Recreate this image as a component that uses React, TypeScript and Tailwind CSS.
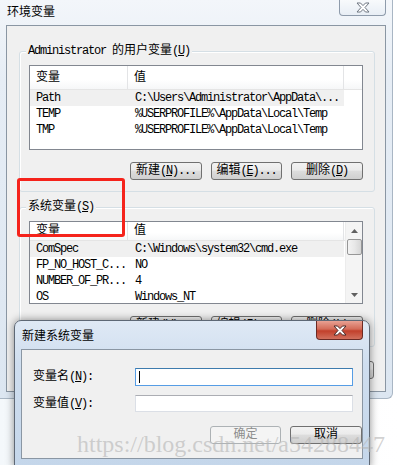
import React from 'react';

const M: React.FC<{ children: React.ReactNode }> = ({ children }) => (
  <span className="tracking-[-1.2px]">{children}</span>
);

const Key: React.FC<{ k: string }> = ({ k }) => (
  <M>
    (<u className="underline-offset-1">{k}</u>)
  </M>
);

const Btn: React.FC<{ w: string; disabled?: boolean; children: React.ReactNode }> = ({ w, disabled, children }) => (
  <div
    className={
      disabled
        ? `${w} h-[18px] rounded-[3px] border border-[#adb2b5] bg-[#f4f4f4] text-[#8d8d8d] flex items-center justify-center text-[12px] leading-none`
        : `${w} h-[18px] rounded-[3px] border border-[#707070] bg-[linear-gradient(#f2f2f2,#ebebeb_45%,#dddddd_50%,#cfcfcf)] text-black flex items-center justify-center text-[12px] leading-none`
    }
  >
    {children}
  </div>
);

type Row = [string, string];

const ListView: React.FC<{ rows: Row[]; h: string; scroll?: boolean }> = ({ rows, h, scroll }) => (
  <div className={`w-[334px] ${h} border border-[#828790] bg-white flex overflow-hidden`}>
    <div className="flex-1 flex flex-col">
      <div className="h-[24px] flex border-b border-[#e5e5e5] bg-[linear-gradient(#ffffff,#ffffff_60%,#f6f7f8)]">
        <div className="w-[98px] border-r border-[#e3e4e6] pl-[6px] flex items-center text-[12px]">变量</div>
        <div className="w-[216px] border-r border-[#e3e4e6] pl-[6px] flex items-center text-[12px]">值</div>
        <div className="flex-1" />
      </div>
      {rows.map(([n, v], i) => (
        <div key={n} className="h-[16px] flex text-[12px] leading-[16px] whitespace-nowrap">
          <div className={`w-[314px] flex ${i === 0 ? 'bg-[#f0f0f0]' : ''}`}>
            <div className="w-[99px] pl-[6px] overflow-hidden"><M>{n}</M></div>
            <div className="w-[215px] pl-[6px] overflow-hidden"><M>{v}</M></div>
          </div>
        </div>
      ))}
    </div>
    {scroll && (
      <div className="w-[17px] bg-[#f4f4f4] border-l border-[#ececec] flex flex-col items-center">
        <div className="h-[17px] flex items-center justify-center">
          <svg width="7" height="4" viewBox="0 0 7 4"><path d="M3.5 0L7 4H0z" fill="#606060" /></svg>
        </div>
        <div className="w-[15px] h-[16px] rounded-[2px] border border-[#979797] bg-[linear-gradient(90deg,#f3f3f3,#e8e8e8_50%,#d6d6d6)]" />
        <div className="flex-1" />
        <div className="h-[17px] flex items-center justify-center">
          <svg width="7" height="4" viewBox="0 0 7 4"><path d="M0 0H7L3.5 4z" fill="#606060" /></svg>
        </div>
      </div>
    )}
  </div>
);

const GroupBox: React.FC<{ label: React.ReactNode; className: string; children: React.ReactNode }> = ({ label, className, children }) => (
  <div className={`relative w-[356px] rounded-[3px] border border-[#d5dfe5] shadow-[inset_1px_1px_0_#ffffff] ${className}`}>
    <div className="absolute left-[6px] -top-[8px] px-[2px] bg-[#f0f0f0] text-[12px] leading-[14px] whitespace-nowrap">
      {label}
    </div>
    {children}
  </div>
);

const CloseX: React.FC<{ fill: string; stroke: string }> = ({ fill, stroke }) => (
  <svg width="14" height="11" viewBox="0 0 14 11">
    <path
      d="M1 1H4.5L7 3.6L9.5 1H13L9 5.5L13 10H9.5L7 7.4L4.5 10H1L5 5.5z"
      fill={fill}
      stroke={stroke}
      strokeWidth="1"
      strokeLinejoin="round"
    />
  </svg>
);

export default function App() {
  const userRows: Row[] = [
    ['Path', 'C:\\Users\\Administrator\\AppData\\...'],
    ['TEMP', '%USERPROFILE%\\AppData\\Local\\Temp'],
    ['TMP', '%USERPROFILE%\\AppData\\Local\\Temp'],
  ];
  const sysRows: Row[] = [
    ['ComSpec', 'C:\\Windows\\system32\\cmd.exe'],
    ['FP_NO_HOST_C...', 'NO'],
    ['NUMBER_OF_PR...', '4'],
    ['OS', 'Windows_NT'],
  ];

  return (
    <div className="relative w-[399px] h-[465px] overflow-hidden bg-[linear-gradient(90deg,#f4f8fb,#ffffff)] font-['Liberation_Mono','Noto_Sans_CJK_SC',monospace] text-black">
      {/* main window */}
      <div className="w-[393px] h-[399px] px-[6px] pb-[6px] border-r border-b border-[#a9b6c4] rounded-br-[6px] bg-[linear-gradient(#f3f6fa,#e6edf5_20%,#dce6f1)] flex flex-col">
        <div className="h-[25px] flex justify-between items-start">
          <div className="pl-[1px] pt-[3px] text-[12px] leading-[16px] font-['Noto_Sans_CJK_SC',sans-serif]">环境变量</div>
          <div className="w-[47px] h-[16px] rounded-b-[4px] border border-t-0 border-[#8e9bab] bg-[linear-gradient(#f8fafc,#e8eef5)] flex items-center justify-center">
            <CloseX fill="#ffffff" stroke="#6e7681" />
          </div>
        </div>
        <div className="flex-1 border border-[#8a96a3] bg-[#f0f0f0] pl-[12px] pt-[25px]">
          <GroupBox
            className="h-[141px] pl-[9px] pt-[13px]"
            label={<><M>Administrator </M>的用户变量<Key k="U" /></>}
          >
            <ListView rows={userRows} h="h-[85px]" />
            <div className="mt-[12px] w-[334px] flex justify-end gap-[9px]">
              <Btn w="w-[72px]">新建<Key k="N" /><M>...</M></Btn>
              <Btn w="w-[71px]">编辑<Key k="E" /><M>...</M></Btn>
              <Btn w="w-[72px]">删除<Key k="D" /></Btn>
            </div>
          </GroupBox>
          <GroupBox className="mt-[15px] h-[140px] pl-[9px] pt-[13px]" label={<>系统变量<Key k="S" /></>}>
            <ListView rows={sysRows} h="h-[83px]" scroll />
            <div className="mt-[12px] w-[334px] flex justify-end gap-[9px]">
              <Btn w="w-[72px]">新建<Key k="W" /><M>...</M></Btn>
              <Btn w="w-[71px]">编辑<Key k="I" /><M>...</M></Btn>
              <Btn w="w-[72px]">删除<Key k="L" /></Btn>
            </div>
          </GroupBox>
          <div className="mt-[14px] w-[355px] flex justify-end gap-[8px]">
            <Btn w="w-[72px]">确定</Btn>
            <Btn w="w-[72px]">取消</Btn>
          </div>
        </div>
      </div>

      {/* red highlight box */}
      <div className="absolute left-[17px] top-[178px] w-[108px] h-[59px] rounded-[3px] border-[3px] border-[#f5231b]" />

      {/* new system variable dialog */}
      <div className="absolute left-[14px] top-[320px] w-[356px] h-[148px] rounded-t-[7px] border border-[#5e6875] bg-[linear-gradient(#dfe9f5,#cfdeef_30%,#c4d6ea)] px-[6px] shadow-[0_0_8px_rgba(0,0,0,0.45)] flex flex-col">
        <div className="h-[28px] flex justify-between items-start">
          <div className="pl-[1px] pt-[6px] text-[12px] leading-[16px] font-['Noto_Sans_CJK_SC',sans-serif]">新建系统变量</div>
          <div className="w-[47px] h-[19px] rounded-b-[4px] border border-t-0 border-[#6b2a24] bg-[linear-gradient(#e8a193,#d36b58_45%,#c2402b_55%,#d1705d)] flex items-center justify-center">
            <CloseX fill="#ffffff" stroke="#4a2a28" />
          </div>
        </div>
        <div className="h-[110px] border border-[#8a96a3] bg-[#f0f0f0] pl-[11px] pt-[18px]">
          <div className="flex items-center h-[18px]">
            <div className="w-[102px] text-[12px]">变量名<Key k="N" /><M>:</M></div>
            <div className="w-[218px] h-[18px] border border-[#569de5] border-t-[#3d7bad] bg-white flex items-center pl-[3px]">
              <div className="w-px h-[12px] bg-black" />
            </div>
          </div>
          <div className="mt-[9px] flex items-center h-[17px]">
            <div className="w-[102px] text-[12px]">变量值<Key k="V" /><M>:</M></div>
            <div className="w-[218px] h-[17px] border border-[#dbdfe6] border-t-[#abadb3] bg-white" />
          </div>
          <div className="mt-[14px] w-[329px] flex justify-end gap-[9px]">
            <Btn w="w-[71px]" disabled>确定</Btn>
            <Btn w="w-[72px]">取消</Btn>
          </div>
        </div>
      </div>

      {/* watermark */}
      <div className="absolute left-[77px] top-[432px] text-[24px] leading-none font-['Liberation_Serif',serif] text-[#b4b4b4]/60 whitespace-nowrap pointer-events-none">
        https://blog.csdn.net/a54288447
      </div>
    </div>
  );
}
